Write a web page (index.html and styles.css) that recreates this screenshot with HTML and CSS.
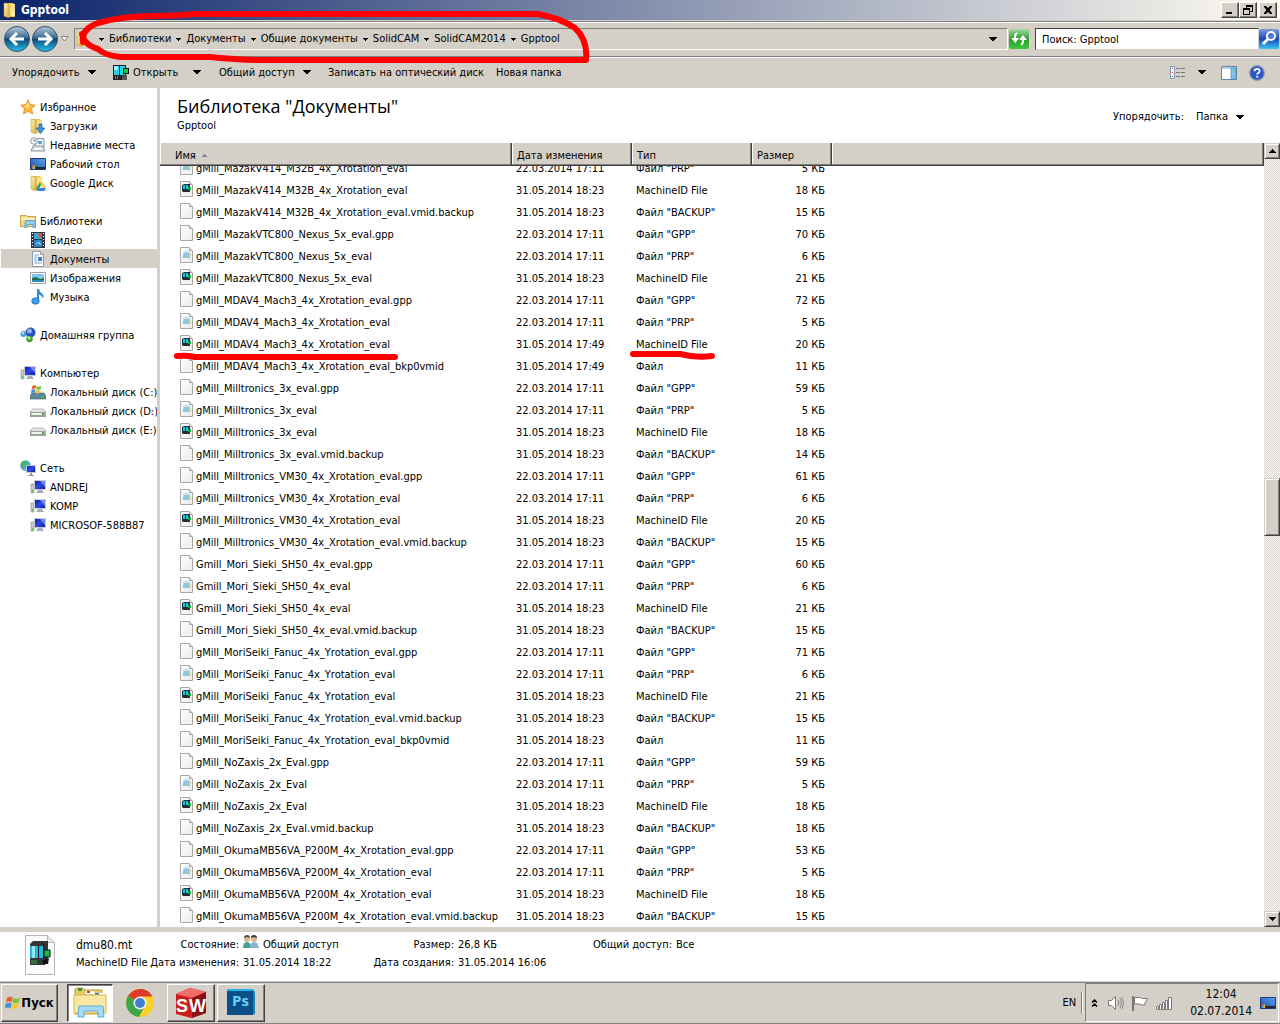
FILE: index.html
```html
<!DOCTYPE html>
<html lang="ru">
<head>
<meta charset="utf-8">
<title>Gpptool</title>
<link rel="stylesheet" href="styles.css">
</head>
<body>
<svg class="defs" aria-hidden="true">
  <defs>
    <linearGradient id="gFolder" x1="0" x2="1" y1="0" y2="1"><stop offset="0" stop-color="#fff4b8"/><stop offset="1" stop-color="#dca93a"/></linearGradient>
    <linearGradient id="gNav" x1="0" x2="0" y1="0" y2="1"><stop offset="0" stop-color="#b9c9d8"/><stop offset=".45" stop-color="#3b6a93"/><stop offset=".5" stop-color="#0d4779"/><stop offset="1" stop-color="#25c3ee"/></linearGradient>
    <linearGradient id="gPage" x1="0" x2="1" y1="0" y2="1"><stop offset="0" stop-color="#fff"/><stop offset="1" stop-color="#ececec"/></linearGradient>
    <linearGradient id="gScreen" x1="0" x2="1" y1="0" y2="1"><stop offset="0" stop-color="#0a1aa0"/><stop offset=".5" stop-color="#2b4be0"/><stop offset="1" stop-color="#0c1c9a"/></linearGradient>
    <linearGradient id="gDesk" x1="0" x2="1" y1="1" y2="0"><stop offset="0" stop-color="#1a4fa8"/><stop offset="1" stop-color="#5fa4ee"/></linearGradient>
    <linearGradient id="gDisk" x1="0" x2="0" y1="0" y2="1"><stop offset="0" stop-color="#f6f6f6"/><stop offset="1" stop-color="#a9abae"/></linearGradient>
    <linearGradient id="gGreen" x1="0" x2="0" y1="0" y2="1"><stop offset="0" stop-color="#a5dba0"/><stop offset=".5" stop-color="#2f9c2f"/><stop offset="1" stop-color="#3cc83a"/></linearGradient>
    <linearGradient id="gFind" x1="0" x2="0" y1="0" y2="1"><stop offset="0" stop-color="#7e9be0"/><stop offset=".5" stop-color="#1d45b8"/><stop offset="1" stop-color="#38c8f4"/></linearGradient>
  </defs>
  <symbol id="folder" viewBox="0 0 16 16"><path d="M3 1h8l2 2v12H3z" fill="#e9c45c"/><path d="M2 1l5 1v14l-5-2z" fill="url(#gFolder)" stroke="#c79a35" stroke-width=".5"/><path d="M8 2h5v12H8z" fill="#f7dd86"/><path d="M10 9h2v5h-2z" fill="#fff3bd"/></symbol>
  <symbol id="page" viewBox="0 0 14 16"><path d="M.5.5h9l3 3v12H.5z" fill="url(#gPage)" stroke="#a8a8a8"/><path d="M9.500.5v3h3" fill="#e4e4e4" stroke="#a8a8a8"/></symbol>
  <symbol id="prp" viewBox="0 0 14 16"><use href="#page"/><path d="M4 4h6l-1 7H2.500z" fill="#8fc6dc"/><path d="M4 4h6v2H4z" fill="#c8e4ee"/><path d="M9 11l1-5 1 1-1 5z" fill="#d7c59a"/></symbol>
  <symbol id="mid" viewBox="0 0 14 16"><use href="#page"/><path d="M2 4l2-1h6v8H3l-1-1z" fill="#23303a"/><path d="M3 4h2v4H3zM6 4h2v4H6z" fill="#15c9e6"/><path d="M8 6h3v3H8z" fill="#12a53a"/></symbol>
  <symbol id="cam" viewBox="0 0 16 16"><path d="M0 0h13v15H0z" fill="#222"/><path d="M1 1h11v9H1z" fill="#26d4ea"/><path d="M1 1h4v4H1z" fill="#9ff3fb"/><path d="M6 1h1v9H6z" fill="#222"/><path d="M10 3h6v6h-6z" fill="#111"/><path d="M11 4h4v4h-4z" fill="#17c83e"/><path d="M2 11h1v3H2zM4 11h1v3H4z" fill="#3ea550"/><path d="M9 11l5-1v5H9z" fill="#555"/></symbol>
  <symbol id="pc" viewBox="0 0 16 16"><path d="M1 5h3v9H1z" fill="#c8cacc" stroke="#888" stroke-width=".6"/><path d="M2 11h1v2H2z" fill="#4db848"/><path d="M4.500 1.500h11v9h-11z" fill="url(#gScreen)" stroke="#c9cdd3"/><path d="M10 2h5v6z" fill="#9fb4f8" opacity=".6"/><path d="M8 11h4l2 3H6z" fill="#a9adb3"/></symbol>
  <symbol id="disk" viewBox="0 0 16 16"><path d="M3 6h10l3 3v4.500H0V9z" fill="url(#gDisk)" stroke="#808080" stroke-width=".6"/><path d="M1 9.500h14v3H1z" fill="#f1f1f1" stroke="#777" stroke-width=".6"/><path d="M12 10h2v2h-2z" fill="#31b41e"/></symbol>
  <symbol id="flag4" viewBox="0 0 16 16"><path d="M2 3q3-2 5.500-.5L6.700 7Q4 6 1 7.500z" fill="#ee5a28"/><path d="M8.300 3Q11 4.500 15 3l-1 4.500q-3.500 1.500-6.500 0z" fill="#7ec13c"/><path d="M.8 8.500q3-1.500 5.700-.3L5.700 13Q3 12 0 13z" fill="#3c92dc"/><path d="M7.300 8.600q3 1.300 6.500 0L13 13q-3.500 1.700-6.600.2z" fill="#fbc42c"/></symbol>
  <symbol id="desk" viewBox="0 0 16 16"><path d="M.5 2.500h15v11H.5z" fill="url(#gDesk)" stroke="#1c3c78"/><path d="M5 11h10v2H5z" fill="#23272d"/><path d="M2 9h2v2H2z" fill="#e8602a"/><path d="M4 9h1v2H4z" fill="#7ec13c"/><path d="M2 11h2v2H2z" fill="#4fa9ef"/><path d="M4 11h1v2H4z" fill="#fbc42c"/></symbol>
  <symbol id="down" viewBox="0 0 8 5"><path d="M0 0h8v1H7v1H6v1H5v1H3V3H2V2H1V1H0z"/></symbol>
  <symbol id="drop" viewBox="0 0 5 3"><path d="M0 0h5v1H4v1H3v1H2V2H1V1H0z"/></symbol>
</svg>

<header class="titlebar">
  <svg class="i16"><use href="#folder"/></svg>
  <h1>Gpptool</h1>
  <button class="win" aria-label="Свернуть"><svg viewBox="0 0 10 10"><path d="M1 7h6v2H1z"/></svg></button>
  <button class="win" aria-label="Восстановить"><svg viewBox="0 0 10 10"><path d="M3 0h7v7H7V6h2V2H4v1H3zM0 3h7v7H0zM1 5v4h5V5z" fill-rule="evenodd"/></svg></button>
  <button class="win close" aria-label="Закрыть"><svg viewBox="0 0 10 10"><path d="M1 1h2l2 2 2-2h2v1L6.500 5 9 8v1H7L5 7 3 9H1V8l2.500-3L1 2z"/></svg></button>
</header>

<div class="navbar">
  <button class="round" aria-label="Назад"><svg viewBox="0 0 26 26"><circle cx="13" cy="13" r="12.500" fill="url(#gNav)" stroke="#31506e"/><path d="M13 7l-6 6 6 6M7 13h13" fill="none" stroke="#fff" stroke-width="3"/></svg></button>
  <button class="round" aria-label="Вперёд"><svg viewBox="0 0 26 26"><circle cx="13" cy="13" r="12.500" fill="url(#gNav)" stroke="#31506e"/><path d="M13 7l6 6-6 6M19 13H6" fill="none" stroke="#fff" stroke-width="3"/></svg></button>
  <button class="recent" aria-label="Последние страницы"><svg viewBox="0 0 9 6"><path d="M1 .5h7L4.500 5z" fill="#fff" stroke="#808080"/></svg></button>
  <nav class="address" aria-label="Адрес">
    <svg class="i16"><use href="#folder"/></svg>
    <svg class="drop"><use href="#drop"/></svg><a href="#">Библиотеки</a>
    <svg class="drop"><use href="#drop"/></svg><a href="#">Документы</a>
    <svg class="drop"><use href="#drop"/></svg><a href="#">Общие документы</a>
    <svg class="drop"><use href="#drop"/></svg><a href="#">SolidCAM</a>
    <svg class="drop"><use href="#drop"/></svg><a href="#">SolidCAM2014</a>
    <svg class="drop"><use href="#drop"/></svg><a href="#">Gpptool</a>
    <svg class="down history"><use href="#down"/></svg>
  </nav>
  <button class="refresh" aria-label="Обновить"><svg viewBox="0 0 20 20"><rect width="20" height="20" rx="2" fill="url(#gGreen)"/><path d="M8 4Q5 6 6.500 10M12 16q3-2 1.500-6" fill="none" stroke="#fff" stroke-width="2"/><path d="M2 9h8l-3.500 5zM10 11h8l-4-5z" fill="#fff"/></svg></button>
  <input class="search" type="text" aria-label="Поиск" value="Поиск: Gpptool">
  <button class="find" aria-label="Найти"><svg viewBox="0 0 20 20"><rect width="20" height="20" rx="2" fill="url(#gFind)"/><circle cx="12" cy="7" r="4" fill="#4a78d8" stroke="#fff" stroke-width="2"/><path d="M9 10l-5 5" stroke="#fff" stroke-width="3"/></svg></button>
</div>

<div class="toolbar">
  <button class="tool organize">Упорядочить <svg class="down"><use href="#down"/></svg></button>
  <button class="tool open"><svg class="i16"><use href="#cam"/></svg> Открыть <svg class="down"><use href="#down"/></svg></button>
  <button class="tool share">Общий доступ <svg class="down"><use href="#down"/></svg></button>
  <button class="tool burn">Записать на оптический диск</button>
  <button class="tool">Новая папка</button>
  <div class="tools-right">
    <button class="tool view" aria-label="Вид"><svg class="i16" viewBox="0 0 16 16"><path d="M.5 1.500h4v12h-4z" fill="#fff" stroke="#8a93a8"/><path d="M2 3h1v1H2zM2 11h1v1H2z" fill="#3467c0"/><path d="M2 7h1v1H2z" fill="#e02020"/><path d="M6 3.500h4M11 3.500h4M6 7.500h4M11 7.500h4M6 11.500h4M11 11.500h4" stroke="#70757e"/></svg><svg class="down"><use href="#down"/></svg></button>
    <button class="tool" aria-label="Область просмотра"><svg class="i16" viewBox="0 0 16 16"><path d="M.5 1.500h15v13H.5z" fill="#fff" stroke="#5d86ae"/><path d="M1 2h14v2H1z" fill="#b4d1ea"/><path d="M10 3h5v11h-5z" fill="#7fc4e6" stroke="#5d86ae" stroke-width=".7"/></svg></button>
    <button class="tool" aria-label="Справка"><svg class="i16" viewBox="0 0 16 16"><circle cx="8" cy="8" r="7.300" fill="#2d56c8" stroke="#8c96a8" stroke-width="1.200"/><path d="M5.500 6.300q0-2.500 2.600-2.500t2.500 2.200q0 1.300-1.300 2-1.100.6-1.100 1.600" fill="none" stroke="#fff" stroke-width="1.800"/><path d="M7.300 10.800h1.900v1.900H7.300z" fill="#fff"/></svg></button>
  </div>
</div>

<main class="content">
  <nav class="sidebar" aria-label="Область переходов">
    <ul>
      <li class="top"><svg class="i16" viewBox="0 0 16 16"><path d="M8 .8l2.200 4.800 5.200.6-3.900 3.500 1.100 5.200L8 12.300l-4.600 2.600 1.100-5.200L.6 6.200l5.200-.6z" fill="#fdb93a" stroke="#dd8420" stroke-width=".8"/><path d="M8 3l1.500 3.500L8 9 4 7l2.500-.5z" fill="#ffe59a"/></svg><a href="#">Избранное</a></li>
      <li><svg class="i16" viewBox="0 0 16 16"><use href="#folder" x="-1" width="16" height="16"/><path d="M9 6h3v4h3l-4.500 5.500L6 10h3z" fill="#3b95e0" stroke="#1c62b0" stroke-width=".7"/></svg><a href="#">Загрузки</a></li>
      <li><svg class="i16" viewBox="0 0 16 16"><path d="M5 1.500h9v9H5z" fill="#eef2f5" stroke="#8d979f"/><path d="M3 9h10l2 5H1z" fill="#dfe3e6" stroke="#8d979f"/><path d="M8 4h4v3H8z" fill="#5ea9d8"/><path d="M5 11h6v2H5z" fill="#fff"/><circle cx="4" cy="4" r="3.300" fill="#fff" stroke="#8d979f"/><path d="M4 2v2h2" fill="none" stroke="#555" stroke-width=".8"/></svg><a href="#">Недавние места</a></li>
      <li><svg class="i16"><use href="#desk"/></svg><a href="#">Рабочий стол</a></li>
      <li><svg class="i16" viewBox="0 0 16 16"><use href="#folder" x="-1" width="16" height="16"/><path d="M10 7l-4 7 1.500 2 4-7z" fill="#1da462"/><path d="M10 7h3l3 6h-3z" fill="#ffcf48"/><path d="M9 13h7l-1.500 3H7.500z" fill="#3a7df0"/></svg><a href="#">Google Диск</a></li>
    </ul>
    <ul>
      <li class="top"><svg class="i16" viewBox="0 0 16 16"><path d="M.5 2.500h6l1 1h8v10H.5z" fill="#f4d983" stroke="#c9a24b"/><path d="M1 5h14v2H1z" fill="#fdf0bb"/><path d="M4.500 14.500l1-7h9l1 7h-2.500v-3h-6v3z" fill="#8fd2ee" stroke="#4a9cc8" stroke-width=".8"/></svg><a href="#">Библиотеки</a></li>
      <li><svg class="i16" viewBox="0 0 16 16"><path d="M1 0h14v16H1z" fill="#33383e"/><path d="M4 1h8v6H4z" fill="#3fa3e0"/><path d="M4 8h8v7H4z" fill="#2f7fc4"/><path d="M9 1h3v5l-4-2z" fill="#d8572c"/><path d="M5 12l4-3 3 4z" fill="#62c1f2"/><path d="M2.500 1v15M13.500 1v15" stroke="#fff" stroke-dasharray="1 2"/></svg><a href="#">Видео</a></li>
      <li class="selected"><svg class="i16" viewBox="0 0 16 16"><path d="M2.500.5h8l3 3v12h-11z" fill="#fff" stroke="#8f9aa5"/><path d="M10.500.5v3h3" fill="#ddd" stroke="#8f9aa5"/><path d="M4 4h5M4 6h3M4 8h3M4 10h3M4 12h8" stroke="#7fa6cc"/><path d="M8 6h4v4H8z" fill="#3b7fc4"/></svg><a href="#" aria-current="true">Документы</a></li>
      <li><svg class="i16" viewBox="0 0 16 16"><path d="M.5 2.500h15v11H.5z" fill="#fff" stroke="#9aa3ab"/><path d="M2 4h12v8H2z" fill="#7fc8f0"/><path d="M2 8l4-1 4 2 4-1v2H2z" fill="#1f6b4a"/><path d="M2 10h12v2H2z" fill="#2e8bb8"/></svg><a href="#">Изображения</a></li>
      <li><svg class="i16" viewBox="0 0 16 16"><path d="M7 0h2q.5 3 3 4.500t1 5q-.8-3-4-4V12H7z" fill="#2f8edb"/><ellipse cx="5.500" cy="12" rx="3.800" ry="3.200" fill="#3c9de8" stroke="#1c6ab4" stroke-width=".7"/></svg><a href="#">Музыка</a></li>
    </ul>
    <ul>
      <li class="top"><svg class="i16" viewBox="0 0 16 16"><circle cx="10.500" cy="5.500" r="5" fill="#2a50b8"/><circle cx="9.500" cy="4" r="2.500" fill="#8fb2f0"/><circle cx="3.500" cy="7" r="3" fill="#3d9be0"/><circle cx="3" cy="6" r="1.300" fill="#c5e6fb"/><circle cx="9.500" cy="12" r="3.300" fill="#46a832"/><circle cx="9" cy="11" r="1.400" fill="#bdeaa8"/></svg><a href="#">Домашняя группа</a></li>
    </ul>
    <ul>
      <li class="top"><svg class="i16"><use href="#pc"/></svg><a href="#">Компьютер</a></li>
      <li><svg class="i16" viewBox="0 0 16 16"><path d="M2 9h12l2 3v3H0v-3z" fill="#5b8aa0" stroke="#456" stroke-width=".6"/><path d="M12 12h2v2h-2z" fill="#40d020"/><svg x="1" y="0" width="11" height="11"><use href="#flag4"/></svg></svg><a href="#">Локальный диск (C:)</a></li>
      <li><svg class="i16"><use href="#disk"/></svg><a href="#">Локальный диск (D:)</a></li>
      <li><svg class="i16"><use href="#disk"/></svg><a href="#">Локальный диск (E:)</a></li>
    </ul>
    <ul>
      <li class="top"><svg class="i16" viewBox="0 0 16 16"><circle cx="5.500" cy="5.500" r="5.300" fill="#4aa8e0"/><path d="M2 2q3-2 5 0L5 5 3 8Q0 6 2 2zM7 5l3-1v4z" fill="#4db848"/><path d="M6.500 5.500h9v7h-9z" fill="url(#gScreen)" stroke="#c9cdd3"/><path d="M10 13h2v2h2v1H8v-1h2z" fill="#999"/></svg><a href="#">Сеть</a></li>
      <li><svg class="i16"><use href="#pc"/></svg><a href="#">ANDREJ</a></li>
      <li><svg class="i16"><use href="#pc"/></svg><a href="#">KOMP</a></li>
      <li><svg class="i16"><use href="#pc"/></svg><a href="#">MICROSOF-588B87</a></li>
    </ul>
  </nav>

  <section class="library">
    <div class="library-head">
      <div>
        <h2>Библиотека "Документы"</h2>
        <p>Gpptool</p>
      </div>
      <div class="arrange"><span>Упорядочить:</span><button class="tool">Папка <svg class="down"><use href="#down"/></svg></button></div>
    </div>
    <div class="listing">
      <table>
        <thead><tr><th>Имя <svg class="sort" viewBox="0 0 5 3"><path d="M2 0h1v1h1v1h1v1H0V2h1V1h1z"/></svg></th><th>Дата изменения</th><th>Тип</th><th>Размер</th><td></td></tr></thead>
        <tbody>
          <tr><td><svg><use href="#prp"/></svg>gMill_MazakV414_M32B_4x_Xrotation_eval</td><td>22.03.2014 17:11</td><td>Файл "PRP"</td><td>5 КБ</td></tr>
          <tr><td><svg><use href="#mid"/></svg>gMill_MazakV414_M32B_4x_Xrotation_eval</td><td>31.05.2014 18:23</td><td>MachineID File</td><td>18 КБ</td></tr>
          <tr><td><svg><use href="#page"/></svg>gMill_MazakV414_M32B_4x_Xrotation_eval.vmid.backup</td><td>31.05.2014 18:23</td><td>Файл "BACKUP"</td><td>15 КБ</td></tr>
          <tr><td><svg><use href="#page"/></svg>gMill_MazakVTC800_Nexus_5x_eval.gpp</td><td>22.03.2014 17:11</td><td>Файл "GPP"</td><td>70 КБ</td></tr>
          <tr><td><svg><use href="#prp"/></svg>gMill_MazakVTC800_Nexus_5x_eval</td><td>22.03.2014 17:11</td><td>Файл "PRP"</td><td>6 КБ</td></tr>
          <tr><td><svg><use href="#mid"/></svg>gMill_MazakVTC800_Nexus_5x_eval</td><td>31.05.2014 18:23</td><td>MachineID File</td><td>21 КБ</td></tr>
          <tr><td><svg><use href="#page"/></svg>gMill_MDAV4_Mach3_4x_Xrotation_eval.gpp</td><td>22.03.2014 17:11</td><td>Файл "GPP"</td><td>72 КБ</td></tr>
          <tr><td><svg><use href="#prp"/></svg>gMill_MDAV4_Mach3_4x_Xrotation_eval</td><td>22.03.2014 17:11</td><td>Файл "PRP"</td><td>5 КБ</td></tr>
          <tr><td><svg><use href="#mid"/></svg>gMill_MDAV4_Mach3_4x_Xrotation_eval</td><td>31.05.2014 17:49</td><td>MachineID File</td><td>20 КБ</td></tr>
          <tr><td><svg><use href="#page"/></svg>gMill_MDAV4_Mach3_4x_Xrotation_eval_bkp0vmid</td><td>31.05.2014 17:49</td><td>Файл</td><td>11 КБ</td></tr>
          <tr><td><svg><use href="#page"/></svg>gMill_Milltronics_3x_eval.gpp</td><td>22.03.2014 17:11</td><td>Файл "GPP"</td><td>59 КБ</td></tr>
          <tr><td><svg><use href="#prp"/></svg>gMill_Milltronics_3x_eval</td><td>22.03.2014 17:11</td><td>Файл "PRP"</td><td>5 КБ</td></tr>
          <tr><td><svg><use href="#mid"/></svg>gMill_Milltronics_3x_eval</td><td>31.05.2014 18:23</td><td>MachineID File</td><td>18 КБ</td></tr>
          <tr><td><svg><use href="#page"/></svg>gMill_Milltronics_3x_eval.vmid.backup</td><td>31.05.2014 18:23</td><td>Файл "BACKUP"</td><td>14 КБ</td></tr>
          <tr><td><svg><use href="#page"/></svg>gMill_Milltronics_VM30_4x_Xrotation_eval.gpp</td><td>22.03.2014 17:11</td><td>Файл "GPP"</td><td>61 КБ</td></tr>
          <tr><td><svg><use href="#prp"/></svg>gMill_Milltronics_VM30_4x_Xrotation_eval</td><td>22.03.2014 17:11</td><td>Файл "PRP"</td><td>6 КБ</td></tr>
          <tr><td><svg><use href="#mid"/></svg>gMill_Milltronics_VM30_4x_Xrotation_eval</td><td>31.05.2014 18:23</td><td>MachineID File</td><td>20 КБ</td></tr>
          <tr><td><svg><use href="#page"/></svg>gMill_Milltronics_VM30_4x_Xrotation_eval.vmid.backup</td><td>31.05.2014 18:23</td><td>Файл "BACKUP"</td><td>15 КБ</td></tr>
          <tr><td><svg><use href="#page"/></svg>Gmill_Mori_Sieki_SH50_4x_eval.gpp</td><td>22.03.2014 17:11</td><td>Файл "GPP"</td><td>60 КБ</td></tr>
          <tr><td><svg><use href="#prp"/></svg>Gmill_Mori_Sieki_SH50_4x_eval</td><td>22.03.2014 17:11</td><td>Файл "PRP"</td><td>6 КБ</td></tr>
          <tr><td><svg><use href="#mid"/></svg>Gmill_Mori_Sieki_SH50_4x_eval</td><td>31.05.2014 18:23</td><td>MachineID File</td><td>21 КБ</td></tr>
          <tr><td><svg><use href="#page"/></svg>Gmill_Mori_Sieki_SH50_4x_eval.vmid.backup</td><td>31.05.2014 18:23</td><td>Файл "BACKUP"</td><td>15 КБ</td></tr>
          <tr><td><svg><use href="#page"/></svg>gMill_MoriSeiki_Fanuc_4x_Yrotation_eval.gpp</td><td>22.03.2014 17:11</td><td>Файл "GPP"</td><td>71 КБ</td></tr>
          <tr><td><svg><use href="#prp"/></svg>gMill_MoriSeiki_Fanuc_4x_Yrotation_eval</td><td>22.03.2014 17:11</td><td>Файл "PRP"</td><td>6 КБ</td></tr>
          <tr><td><svg><use href="#mid"/></svg>gMill_MoriSeiki_Fanuc_4x_Yrotation_eval</td><td>31.05.2014 18:23</td><td>MachineID File</td><td>21 КБ</td></tr>
          <tr><td><svg><use href="#page"/></svg>gMill_MoriSeiki_Fanuc_4x_Yrotation_eval.vmid.backup</td><td>31.05.2014 18:23</td><td>Файл "BACKUP"</td><td>15 КБ</td></tr>
          <tr><td><svg><use href="#page"/></svg>gMill_MoriSeiki_Fanuc_4x_Yrotation_eval_bkp0vmid</td><td>31.05.2014 18:23</td><td>Файл</td><td>11 КБ</td></tr>
          <tr><td><svg><use href="#page"/></svg>gMill_NoZaxis_2x_Eval.gpp</td><td>22.03.2014 17:11</td><td>Файл "GPP"</td><td>59 КБ</td></tr>
          <tr><td><svg><use href="#prp"/></svg>gMill_NoZaxis_2x_Eval</td><td>22.03.2014 17:11</td><td>Файл "PRP"</td><td>5 КБ</td></tr>
          <tr><td><svg><use href="#mid"/></svg>gMill_NoZaxis_2x_Eval</td><td>31.05.2014 18:23</td><td>MachineID File</td><td>18 КБ</td></tr>
          <tr><td><svg><use href="#page"/></svg>gMill_NoZaxis_2x_Eval.vmid.backup</td><td>31.05.2014 18:23</td><td>Файл "BACKUP"</td><td>18 КБ</td></tr>
          <tr><td><svg><use href="#page"/></svg>gMill_OkumaMB56VA_P200M_4x_Xrotation_eval.gpp</td><td>22.03.2014 17:11</td><td>Файл "GPP"</td><td>53 КБ</td></tr>
          <tr><td><svg><use href="#prp"/></svg>gMill_OkumaMB56VA_P200M_4x_Xrotation_eval</td><td>22.03.2014 17:11</td><td>Файл "PRP"</td><td>5 КБ</td></tr>
          <tr><td><svg><use href="#mid"/></svg>gMill_OkumaMB56VA_P200M_4x_Xrotation_eval</td><td>31.05.2014 18:23</td><td>MachineID File</td><td>18 КБ</td></tr>
          <tr><td><svg><use href="#page"/></svg>gMill_OkumaMB56VA_P200M_4x_Xrotation_eval.vmid.backup</td><td>31.05.2014 18:23</td><td>Файл "BACKUP"</td><td>15 КБ</td></tr>
        </tbody>
      </table>
      <div class="scrollbar">
        <button aria-label="Вверх"><svg viewBox="0 0 7 4"><path d="M3 0h1v1h1v1h1v1h1v1H0V3h1V2h1V1h1z"/></svg></button>
        <div class="track"><div class="thumb"></div></div>
        <button aria-label="Вниз"><svg viewBox="0 0 7 4"><path d="M0 0h7v1H6v1H5v1H4v1H3V3H2V2H1V1H0z"/></svg></button>
      </div>
    </div>
  </section>
</main>

<section class="details" aria-label="Сведения">
  <svg class="thumbnail" viewBox="0 0 32 40"><path d="M1.500.5h22l7 7v32h-29z" fill="#fbfbfb" stroke="#b5b5b5"/><path d="M23.500.5v7h7" fill="#e8e8e8" stroke="#b5b5b5"/><path d="M6 9l3-3h15v18l-3 6H6z" fill="#343638"/><path d="M6 11h14v12H6z" fill="#25b7dd"/><path d="M8 11h3v12H8z" fill="#8be9f6"/><path d="M14 9h1v15h-1zM19 9h2v15h-2z" fill="#222"/><path d="M20 15h6v7h-6z" fill="#1fb938" stroke="#111"/><path d="M8 25v4M10 25v4M12 25v4" stroke="#39a84b"/><path d="M18 26l7-3-1 6h-5z" fill="#111"/></svg>
  <dl>
    <dt class="name">dmu80.mt</dt><dt>Состояние:</dt><dd><svg class="users" viewBox="0 0 16 14"><circle cx="4" cy="4" r="3" fill="#e0b48c"/><path d="M1 3q0-3 3-3t3 3l-3-1z" fill="#5a4632"/><path d="M0 13q0-6 4-6t4 6z" fill="#3fa68a"/><circle cx="11" cy="4" r="3" fill="#e0b48c"/><path d="M8 3q0-3 3-3t3 3l-3-1z" fill="#33383c"/><path d="M7 13q0-6 4-6t5 6z" fill="#86b4d8"/></svg>Общий доступ</dd><dt>Размер:</dt><dd>26,8 КБ</dd><dt>Общий доступ:</dt><dd>Все</dd>
    <dt class="kind">MachineID File</dt><dt>Дата изменения:</dt><dd>31.05.2014 18:22</dd><dt>Дата создания:</dt><dd>31.05.2014 16:06</dd>
  </dl>
</section>

<footer class="taskbar">
  <button class="start"><svg class="i16"><use href="#flag4"/></svg>Пуск</button>
  <button class="task active" aria-label="Проводник"><svg viewBox="0 0 34 32"><path d="M2 3q0-2 2-2h5q2 0 2 2h18v24H2z" fill="#e9c767" stroke="#c19a3a"/><path d="M5 1h4v3H5z" fill="#2e9c3a"/><path d="M13 4h8v3h-8z" fill="#fff"/><path d="M14 4h3v2h-3z" fill="#d23a2a"/><path d="M21 6h9v3h-9z" fill="#fff"/><path d="M22 6h4v2h-4z" fill="#3a7ad2"/><path d="M1 8h32v18H1z" fill="#f9e7a2" stroke="#d6b452"/><path d="M5 30l1-11h24l1 11h-6v-6H11v6z" fill="#a5dcf3" stroke="#58aeda"/></svg></button>
  <button class="task plain" aria-label="Chrome"><svg viewBox="0 0 30 30"><circle cx="15" cy="15" r="14" fill="#fbcf2c"/><path d="M15 15L2.900 8A14 14 0 0 1 27.100 8z" fill="#dc3b2c"/><path d="M15 1a14 14 0 0 1 12.500 7.700H15z" fill="#dc3b2c"/><path d="M2.900 8A14 14 0 0 0 14 29l6-11-5-3z" fill="#3fa548"/><path d="M2.900 8l6.500 10L15 15z" fill="#3fa548"/><path d="M27.200 8.500H15v7l5 2.500-6 11A14 14 0 0 0 27.200 8.500z" fill="#fbcf2c"/><circle cx="15" cy="15" r="6.500" fill="#f4f4f4"/><circle cx="15" cy="15" r="5" fill="#3c7fd4"/></svg></button>
  <button class="task" aria-label="SolidWorks"><svg viewBox="0 0 32 32"><path d="M1 7L15 1l16 4v21l-15 5L1 27z" fill="#cc1f1f"/><path d="M1 7L15 1l16 4-14 6z" fill="#f07068"/><path d="M17 11l14-6v21l-14 5z" fill="#8f0f12"/><text x="1" y="25" class="sw">S</text><text x="14" y="25" class="sw">W</text></svg></button>
  <button class="task" aria-label="Photoshop"><svg viewBox="0 0 32 32"><path d="M2 2h26v2H2z" fill="#21b4ea"/><path d="M28 2l2 3v22l-2 1z" fill="#1583b8"/><path d="M2 4h26v24H2z" fill="#0b4f87"/><text x="7" y="19" class="ps">Ps</text></svg></button>
  <span class="lang">EN</span>
  <div class="tray">
    <svg class="chev" viewBox="0 0 7 8"><path d="M1 3.500L3.500 1 6 3.500M1 7.500L3.500 5 6 7.500" fill="none" stroke="#000" stroke-width="1.500"/></svg>
    <svg class="i16" viewBox="0 0 16 16"><path d="M.5 5.500h3l4-4v13l-4-4h-3z" fill="#fff" stroke="#777"/><path d="M10 5q2 3 0 6M12 3q3 5 0 10M14 2q3 6 0 12" fill="none" stroke="#888"/></svg>
    <svg class="i16" viewBox="0 0 16 16"><path d="M1 1v15" stroke="#777" stroke-width="2"/><path d="M2.500 2.500h6l1 1h6l-2 3.500-1 3H9l-1-1H2.500z" fill="#fff" stroke="#777"/></svg>
    <svg class="i16" viewBox="0 0 16 16"><path d="M.5 11.500h2v3h-2zM3.500 9.500h2v5h-2zM6.500 7.500h2v7h-2zM9.500 5.500h2v9h-2zM12.500 2.500h3v12h-3z" fill="#fff" stroke="#777"/></svg>
    <div class="clock"><time>12:04</time><time>02.07.2014</time></div>
    <svg class="i16"><use href="#desk"/></svg>
  </div>
</footer>

<svg class="marker" aria-hidden="true" viewBox="0 0 720 362">
  <path d="M83 42Q81 29 98 23Q122 16 155 16Q175 16 195 14H538Q560 18 575 28Q588 40 586 60H260Q240 60 210 57H120Q104 55 98 49Q84 45 82 34"/>
  <path d="M177 356Q187 355 195 357H395M633 354H680Q696 358 712 356"/>
</svg>
</body>
</html>
```
FILE: styles.css
```css
* { box-sizing: border-box; margin: 0; padding: 0; }

html, body { height: 100%; }

body {
  display: flex;
  flex-direction: column;
  overflow: hidden;
  position: relative;
  background: #d4d0c8;
  color: #000;
  font: 11px/14px "DejaVu Sans Condensed", "DejaVu Sans", sans-serif;
}

button, input { font: inherit; color: inherit; background: none; border: 0; }
a { color: inherit; text-decoration: none; }
ul { list-style: none; }
svg { flex: none; display: block; }

.defs { position: absolute; width: 0; height: 0; }
.i16 { width: 16px; height: 16px; }
.down { width: 8px; height: 5px; }
.drop { width: 5px; height: 3px; }

/* Title bar */
.titlebar {
  display: flex;
  align-items: center;
  height: 20px;
  padding: 0 3px 0 2px;
  background: linear-gradient(90deg, #0a246a, #fffbf0);
}
.titlebar h1 { flex: 1; margin-left: 3px; color: #fff; font-size: 12px; line-height: 16px; }
.win {
  display: flex;
  align-items: center;
  justify-content: center;
  width: 18px;
  height: 16px;
  background: #d4d0c8;
  border: 1px solid;
  border-color: #fff #404040 #404040 #fff;
  box-shadow: inset -1px -1px #808080;
}
.win svg { width: 10px; height: 10px; }
.win.close { margin-left: 2px; }

/* Address row */
.navbar {
  display: flex;
  align-items: center;
  height: 36px;
  margin-top: 1px;
  padding: 0 1px 0 4px;
  border-top: 1px solid #808080;
  border-bottom: 1px solid #808080;
  box-shadow: inset 0 1px #fff, 0 1px #fff;
}
.round { width: 26px; height: 26px; margin-right: 2px; }
.round svg { width: 26px; height: 26px; }
.recent svg { width: 9px; height: 6px; }
.address {
  display: flex;
  flex: 1;
  align-items: center;
  gap: 5px;
  height: 22px;
  margin-left: 5px;
  padding-right: 10px;
  border: 1px solid;
  border-color: #808080 #fff #fff #808080;
}
.address .i16 { margin-right: 3px; }
.history { margin-left: auto; }
.refresh, .find { width: 20px; height: 20px; }
.refresh { margin: 0 6px 0 1px; }
.refresh svg, .find svg { width: 20px; height: 20px; }
.search {
  width: 224px;
  height: 22px;
  padding: 0 6px;
  background: #fff;
  border: 1px solid;
  border-color: #404040 #d4d0c8 #d4d0c8 #404040;
}

/* Command row */
.toolbar {
  display: flex;
  align-items: center;
  height: 31px;
  padding: 0 15px 0 12px;
}
.tool { display: flex; align-items: center; white-space: nowrap; }
.tool .down { margin-left: 8px; }
.organize { width: 101px; }
.open { width: 106px; gap: 4px; }
.open .down { margin-left: auto; margin-right: 18px; }
.share { width: 109px; }
.burn { width: 168px; }
.tools-right { display: flex; gap: 12px; margin-left: auto; }
.tools-right .down { margin-left: 12px; }
.tools-right .view { margin-right: 3px; }

/* Content */
.content { display: flex; flex: 1; min-height: 0; }
.sidebar {
  width: 160px;
  padding-top: 9px;
  overflow: hidden;
  background: #fff;
  border-right: 3px solid #d4d0c8;
}
.sidebar ul { margin-bottom: 19px; }
.sidebar li {
  display: flex;
  align-items: center;
  gap: 4px;
  height: 19px;
  margin-left: 1px;
  padding-left: 29px;
  white-space: nowrap;
}
.sidebar a { padding-top: 2px; }
.sidebar .top { padding-left: 19px; }
.sidebar .selected { background: #d4d0c8; }

.library { display: flex; flex: 1; flex-direction: column; min-width: 0; background: #fff; }
.library-head {
  display: flex;
  justify-content: space-between;
  height: 55px;
  padding: 6px 36px 0 17px;
}
.library-head h2 { font: 18px/24px "Open Sans", "Noto Sans", sans-serif; }
.library-head p { line-height: 16px; }
.arrange { display: flex; align-items: center; gap: 12px; height: 46px; }

.listing { display: flex; flex: 1; min-height: 0; }
table { display: flex; flex: 1; flex-direction: column; min-width: 0; }
tr { display: grid; grid-template-columns: 352px 120px 120px 80px 1fr; }
thead tr { height: 23px; background: #d4d0c8; border-bottom: 1px solid #404040; box-shadow: inset 0 -1px #808080; }
thead th, thead td {
  display: flex;
  align-items: center;
  padding: 3px 4px 0 5px;
  font-weight: normal;
  border-right: 1px solid #404040;
  box-shadow: inset -1px -1px #808080, inset 1px 0 #fff;
}
thead th:first-child { padding-left: 15px; }
.sort { width: 5px; height: 3px; margin-left: 6px; fill: #808080; }
tbody { display: flex; flex: 1; flex-direction: column; justify-content: flex-end; min-height: 0; overflow: hidden; }
tbody tr { flex: none; height: 22px; }
tbody td { height: 22px; padding-left: 4px; line-height: 24px; white-space: nowrap; }
tbody td:first-child { display: flex; gap: 2px; padding-left: 20px; }
tbody td:nth-child(4) { padding-right: 7px; text-align: right; }
tbody svg { width: 14px; height: 16px; margin-top: 2px; }

.scrollbar { display: flex; flex-direction: column; width: 16px; }
.scrollbar button, .thumb {
  background: #d4d0c8;
  border: 1px solid;
  border-color: #d4d0c8 #404040 #404040 #d4d0c8;
  box-shadow: inset 1px 1px #fff, inset -1px -1px #808080;
}
.scrollbar button { display: flex; align-items: center; justify-content: center; height: 16px; }
.scrollbar button svg { width: 7px; height: 4px; }
.track {
  display: flex;
  flex: 1;
  flex-direction: column;
  background: repeating-conic-gradient(#d4d0c8 0 25%, #fff 0 50%) 0 0 / 2px 2px;
}
.track::before { content: ""; flex: 46; }
.track::after { content: ""; flex: 54; }
.thumb { height: 58px; }

/* Details pane */
.details {
  display: flex;
  height: 49px;
  margin-top: 5px;
  padding-left: 24px;
  background: #fff;
}
.thumbnail { width: 32px; height: 40px; margin: 3px 20px 0 0; }
dl {
  display: grid;
  grid-template-columns: 75px 88px 123px 92px 128px 90px 1fr;
  grid-auto-rows: 18px;
  padding-top: 3px;
  line-height: 20px;
  white-space: nowrap;
}
dt { display: flex; justify-content: flex-end; }
dt.name, dt.kind { justify-content: flex-start; }
dt.name { font-size: 12px; }
dd { display: flex; gap: 4px; padding-left: 4px; }
.users { width: 16px; height: 14px; }

/* Taskbar */
.taskbar {
  display: flex;
  align-items: center;
  height: 43px;
  padding: 0 1px;
  border-top: 1px solid #d4d0c8;
  border-bottom: 1px solid #808080;
  box-shadow: inset 0 1px #808080;
}
.start, .task {
  display: flex;
  align-items: center;
  justify-content: center;
  height: 38px;
  border: 1px solid;
  border-color: #fff #404040 #404040 #fff;
  box-shadow: inset -1px -1px #808080;
}
.start { width: 57px; margin-right: 9px; font-size: 13px; font-weight: bold; }
.task { width: 48px; margin-right: 2px; }
.task svg { width: 32px; height: 32px; }
.task.active { width: 46px; background: #fff; border-color: #404040 #fff #fff #404040; box-shadow: inset 1px 1px #808080; }
.task.active svg { width: 34px; }
.task.plain { width: 50px; border-color: transparent; box-shadow: none; }
.task.plain svg { width: 30px; height: 30px; }
.sw { font: bold 18px "Liberation Sans", sans-serif; fill: #fff; }
.ps { font: bold 15px "Open Sans", sans-serif; fill: #6fd0f5; }
.lang { margin-left: auto; padding-right: 5px; line-height: 22px; border-right: 1px solid #808080; box-shadow: 1px 0 #fff; }
.tray {
  display: flex;
  align-items: center;
  gap: 8px;
  height: 39px;
  margin-left: 3px;
  padding: 0 2px 0 5px;
  border: 1px solid;
  border-color: #808080 #fff #fff #808080;
}
.chev { width: 7px; height: 8px; margin-right: 2px; }
.clock { display: flex; flex-direction: column; align-items: center; margin-left: 10px; font-size: 12px; line-height: 17px; }

/* Red pen marks drawn over the window */
.marker { position: absolute; top: 0; left: 0; width: 720px; height: 362px; pointer-events: none; }
.marker path { fill: none; stroke: #f00; stroke-width: 6px; stroke-linecap: round; stroke-linejoin: round; }
```
